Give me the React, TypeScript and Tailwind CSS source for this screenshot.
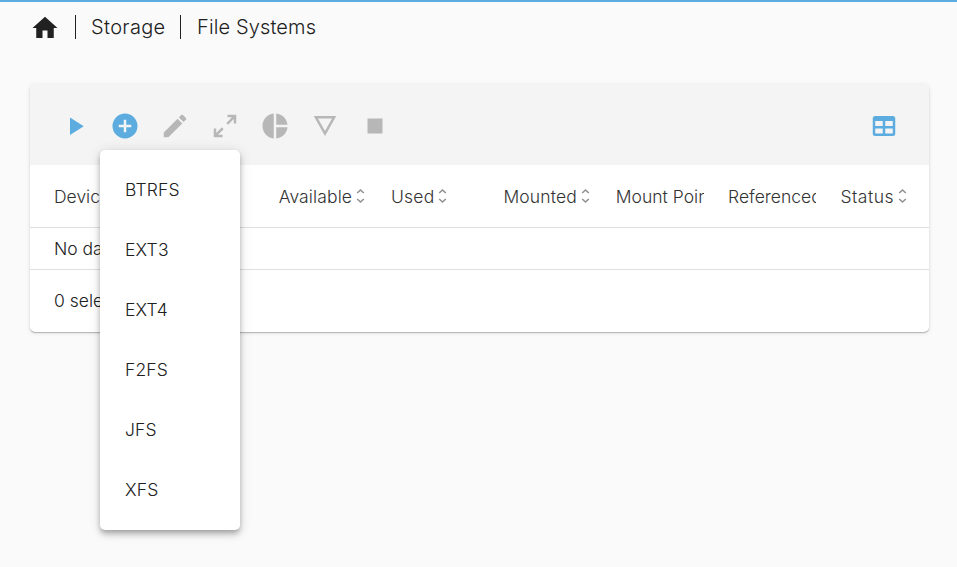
const icons = {
  home: 'M10,20V14H14V20H19V12H22L12,3L2,12H5V20H10Z',
  play: 'M8,5.14V19.14L19,12.14L8,5.14Z',
  plus: 'M17,13H13V17H11V13H7V11H11V7H13V11H17M12,2A10,10 0 0,0 2,12A10,10 0 0,0 12,22A10,10 0 0,0 22,12A10,10 0 0,0 12,2Z',
  pencil:
    'M20.71,7.04C21.1,6.65 21.1,6 20.71,5.63L18.37,3.29C18,2.9 17.35,2.9 16.96,3.29L15.12,5.12L18.87,8.87M3,17.25V21H6.75L17.81,9.93L14.06,6.18L3,17.25Z',
  expand:
    'M10,21V19H6.41L10.91,14.5L9.5,13.09L5,17.59V14H3V21H10M14.5,10.91L19,6.41V10H21V3H14V5H17.59L13.09,9.5L14.5,10.91Z',
  pie: 'M11,2V22C5.9,21.5 2,17.2 2,12C2,6.8 5.9,2.5 11,2M13,2V11H22C21.5,6.2 17.8,2.5 13,2M13,13V22C17.7,21.5 21.5,17.8 22,13H13Z',
  details: 'M6.38,6H17.63L12,16L6.38,6M3,4L12,20L21,4H3Z',
  stop: 'M18,18H6V6H18V18Z',
  table:
    'M5,4H19A2,2 0 0,1 21,6V18A2,2 0 0,1 19,20H5A2,2 0 0,1 3,18V6A2,2 0 0,1 5,4M5,8V12H11V8H5M13,8V12H19V8H13M5,14V18H11V14H5M13,14V18H19V14H13Z',
};

type IconName = keyof typeof icons;

function Icon({ name }: { name: IconName }) {
  return (
    <svg viewBox="0 0 24 24" className="size-[30px] shrink-0" fill="currentColor">
      <path d={icons[name]} />
    </svg>
  );
}

function ToolButton({ name, active = false }: { name: IconName; active?: boolean }) {
  return (
    <button
      className={`flex size-[50px] items-center justify-center ${active ? 'text-[#5dacdf]' : 'text-[#b7b7b7]'}`}
    >
      <Icon name={name} />
    </button>
  );
}

function SortIcon() {
  return (
    <svg
      viewBox="0 0 9 16"
      className="ml-1 h-4 w-[9px] shrink-0"
      fill="none"
      stroke="#919191"
      strokeWidth="1.6"
    >
      <path d="M1.2 5L4.5 2L7.8 5M1.2 11L4.5 14L7.8 11" />
    </svg>
  );
}

const columns = [
  { label: 'Device', tracking: 'tracking-normal' },
  { label: '', tracking: 'tracking-normal' },
  { label: 'Available', tracking: 'tracking-[0.12px]' },
  { label: 'Used', tracking: 'tracking-[0.2px]' },
  { label: 'Mounted', tracking: 'tracking-[0.15px]' },
  { label: 'Mount Point', tracking: 'tracking-[0.03px]' },
  { label: 'Referenced', tracking: 'tracking-normal' },
  { label: 'Status', tracking: 'tracking-[0.5px]' },
];
const fileSystems = ['BTRFS', 'EXT3', 'EXT4', 'F2FS', 'JFS', 'XFS'];

export default function App() {
  return (
    <div className="relative h-[567px] w-[957px] overflow-hidden border-t-2 border-[#5dacdf] bg-[#fafafa] font-['Inter',sans-serif] text-[17.5px] font-light text-[#212121]">
      <nav className="flex h-[50px] items-center pl-[30px] text-[20px]">
        <div className="pt-0.5">
          <Icon name="home" />
        </div>
        <span className="mr-[15px] ml-[15px] h-6 w-px bg-[#212121]" />
        <span className="w-[74px] tracking-[0.35px] whitespace-nowrap">Storage</span>
        <span className="mr-4 ml-[15px] h-6 w-px bg-[#212121]" />
        <span className="tracking-[0.13px]">File Systems</span>
      </nav>

      <main className="mt-8 mr-7 ml-[30px] rounded-[5px] bg-white shadow-[0_1px_1px_-1px_rgba(0,0,0,0.25),0_1px_1px_0_rgba(0,0,0,0.2),0_1px_4px_0_rgba(0,0,0,0.12)]">
        <div className="flex h-[81px] items-center rounded-t-[5px] bg-[#f4f4f4] px-5 pt-[3px]">
          <ToolButton name="play" active />
          <ToolButton name="plus" active />
          <ToolButton name="pencil" />
          <ToolButton name="expand" />
          <ToolButton name="pie" />
          <ToolButton name="details" />
          <ToolButton name="stop" />
          <div className="ml-auto">
            <ToolButton name="table" active />
          </div>
        </div>

        <div className="flex h-[63px] border-b border-[#e0e0e0] pl-3">
          {columns.map(({ label, tracking }, i) => (
            <div key={i} className="flex w-[112.35px] shrink-0 items-center px-3 text-[#333333]">
              <div className="flex h-7 w-full items-center overflow-hidden whitespace-nowrap">
                <span className={`shrink-0 pt-0.5 ${tracking}`}>{label}</span>
                {label && <SortIcon />}
              </div>
            </div>
          ))}
        </div>
        <div className="flex h-[42px] items-center border-b border-[#e0e0e0] px-6 pt-0.5">No data to display</div>
        <div className="flex h-[62px] items-center px-6">0 selected / 0 total</div>
      </main>

      <div className="absolute top-[148px] left-[100px] flex h-[380px] w-[140px] flex-col rounded-[5px] bg-white py-[10px] shadow-[0_2.5px_5px_-1.25px_rgba(0,0,0,0.2),0_5px_6.25px_0_rgba(0,0,0,0.14),0_1.25px_12.5px_0_rgba(0,0,0,0.12)]">
        {fileSystems.map((fs) => (
          <button key={fs} className="flex h-[60px] items-center px-[25px] text-left tracking-[0.15px]">
            {fs}
          </button>
        ))}
      </div>
    </div>
  );
}
